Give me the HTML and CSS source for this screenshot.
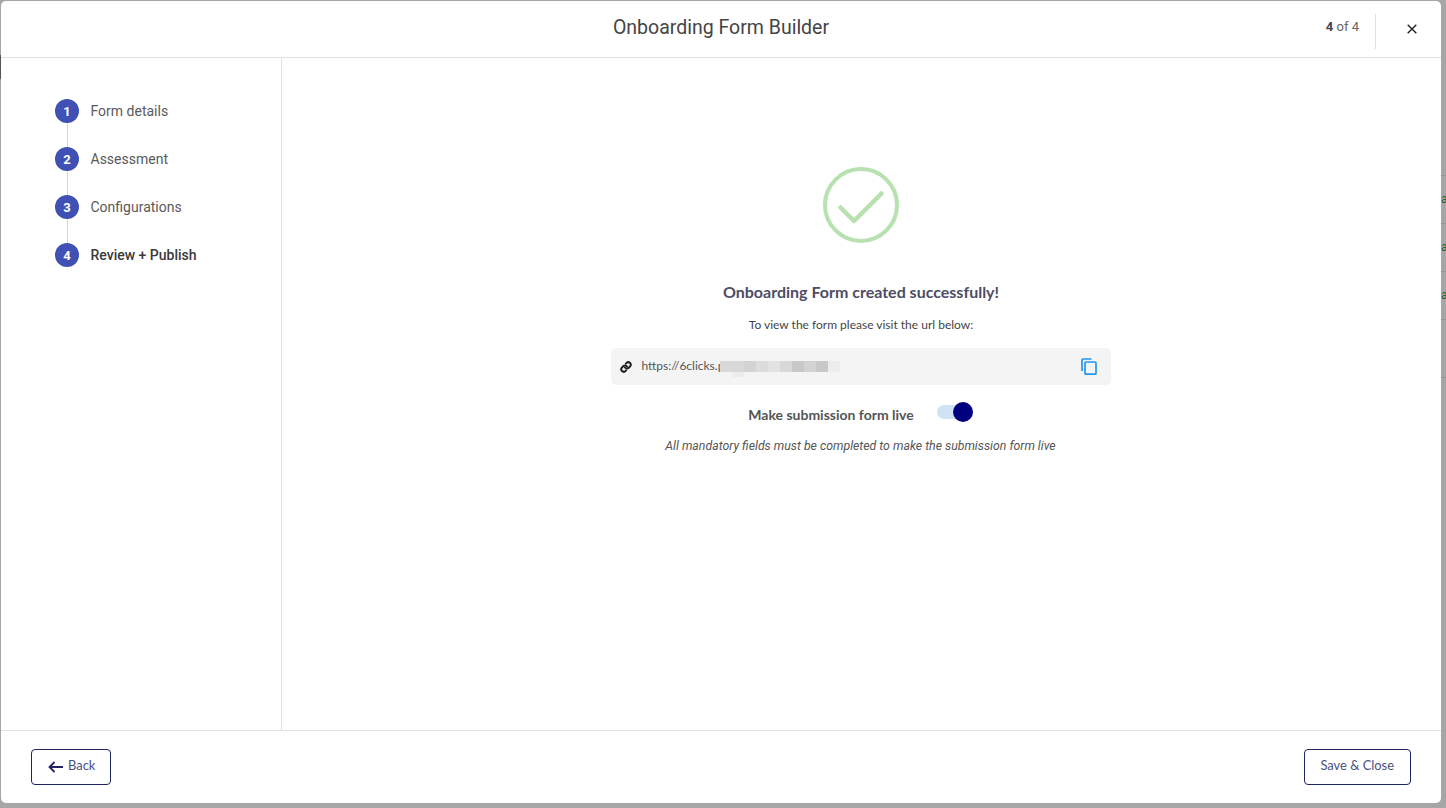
FILE: index.html
```html
<!DOCTYPE html>
<html lang="en">
<head>
    <meta charset="UTF-8">
    <title>Onboarding Form Builder</title>
    <link rel="stylesheet" href="styles.css">
</head>
<body>
    <div class="backdrop-left"></div>

    <div class="modal">
        <header class="modal-header">
            <h1>Onboarding Form Builder</h1>
            <div class="step-count"><strong>4</strong> of 4</div>
            <div class="header-divider"></div>
            <button class="close-btn" aria-label="Close">
                <svg width="10" height="10" viewBox="0 0 10 10"><path d="M0.7 0.7L9.3 9.3M9.3 0.7L0.7 9.3" stroke="#222" stroke-width="1.4" fill="none"/></svg>
            </button>
        </header>

        <div class="modal-body">
            <aside class="sidebar">
                <div class="step"><span class="step-number">1</span>Form details</div>
                <div class="step"><span class="step-number">2</span>Assessment</div>
                <div class="step"><span class="step-number">3</span>Configurations</div>
                <div class="step current"><span class="step-number">4</span>Review + Publish</div>
            </aside>

            <main class="content">
                <svg class="success-icon" width="76" height="76" viewBox="0 0 76 76" fill="none" stroke="#b7e1ae" stroke-linecap="round" stroke-linejoin="round">
                    <circle cx="38" cy="38" r="36" stroke-width="4"/>
                    <path d="M17.5 40.5L31 54L58.5 26.5" stroke-width="4.5"/>
                </svg>
                <h2>Onboarding Form created successfully!</h2>
                <p class="visit-text">To view the form please visit the url below:</p>

                <div class="url-box">
                    <svg class="link-icon" width="12" height="12" viewBox="0 0 24 24" fill="none" stroke="#222" stroke-width="4" stroke-linecap="round" stroke-linejoin="round">
                        <path d="M10 13a5 5 0 0 0 7.5.5l3-3a5 5 0 0 0-7-7l-1.7 1.7"/>
                        <path d="M14 11a5 5 0 0 0-7.5-.5l-3 3a5 5 0 0 0 7 7l1.7-1.7"/>
                    </svg>
                    <span class="url-text">https://6clicks.p</span>
                    <div class="url-blur">
                        <div class="blur-row">
                            <i class="b3"></i><i class="b3"></i><i class="b4"></i><i class="b2"></i><i class="b5"></i><i class="b3"></i><i class="b6"></i><i class="b4"></i><i class="b6"></i><i class="b1"></i>
                        </div>
                        <div class="blur-row low"><i class="none"></i><i class="b1"></i></div>
                    </div>
                    <button class="copy-btn" aria-label="Copy">
                        <svg width="16" height="17" viewBox="0 0 16 17" fill="none" stroke="#2196f3" stroke-width="1.7">
                            <path d="M1 13V1.8C1 1.3 1.3 1 1.8 1H10.5"/>
                            <rect x="4" y="4" width="11" height="12.2" rx="1"/>
                        </svg>
                    </button>
                </div>

                <div class="live-row">
                    <span class="live-label">Make submission form live</span>
                    <span class="toggle"><span class="toggle-knob"></span></span>
                </div>
                <p class="hint">All mandatory fields must be completed to make the submission form live</p>
            </main>
        </div>

        <footer class="modal-footer">
            <button class="btn back-btn">
                <svg width="15" height="12" viewBox="0 0 15 12" fill="none" stroke="#1f2361" stroke-width="1.8"><path d="M15 6H1.5M6.5 1L1.5 6l5 5"/></svg>
                <span>Back</span>
            </button>
            <button class="btn save-btn"><span>Save &amp; Close</span></button>
        </footer>
    </div>

    <div class="backdrop-right">
        <div class="bg-row"></div>
        <div class="bg-row"><span>a</span></div>
        <div class="bg-row"><span>a</span></div>
        <div class="bg-row"><span>a</span></div>
        <div class="bg-row tall"></div>
    </div>
</body>
</html>
```

FILE: styles.css
```css
* {
    margin: 0;
    padding: 0;
    box-sizing: border-box;
}

html, body {
    height: 100%;
}

body {
    font-family: "Lato", sans-serif;
    background: #a6a6a6;
    display: flex;
    height: 808px;
    overflow: hidden;
    padding: 1px 0 5px 0;
}

button {
    font-family: inherit;
    background: none;
    border: none;
    cursor: pointer;
}

.backdrop-left {
    width: 1px;
    height: 24px;
    margin-top: 54px;
    flex: none;
    background: #555;
}

.modal {
    width: 1440px;
    flex: none;
    background: white;
    border-radius: 5px;
    display: flex;
    flex-direction: column;
}

.modal-header {
    height: 57px;
    flex: none;
    border-bottom: 1px solid #e0e0e0;
    display: flex;
    align-items: flex-start;
    position: relative;
}

.modal-header h1 {
    position: absolute;
    left: 0;
    right: 0;
    top: 15px;
    text-align: center;
    font-family: "Roboto", sans-serif;
    font-size: 19.5px;
    line-height: 24px;
    font-weight: 400;
    color: #444;
}

.step-count {
    margin-left: auto;
    margin-top: 18px;
    font-family: "Roboto", sans-serif;
    font-size: 13px;
    line-height: 16px;
    color: #666;
}

.step-count strong {
    color: #444;
}

.header-divider {
    width: 1px;
    height: 35px;
    margin: 13px 0 0 16px;
    background: #e0e0e0;
}

.close-btn {
    width: 10px;
    height: 10px;
    margin: 23px 24px 0 31px;
    display: flex;
}

.modal-body {
    flex: 1;
    display: flex;
    min-height: 0;
}

.sidebar {
    width: 281px;
    flex: none;
    border-right: 1px solid #e0e0e0;
    padding-top: 29px;
    padding-left: 54px;
}

.step {
    height: 48px;
    display: flex;
    align-items: center;
    gap: 11.5px;
    font-family: "Roboto", sans-serif;
    font-size: 14px;
    color: #5a5a5a;
    position: relative;
}

.step:not(:last-child)::after {
    content: "";
    position: absolute;
    left: 12px;
    top: 30px;
    width: 1px;
    height: 36px;
    background: #d5d5d5;
}

.step.current {
    color: #3a3a3a;
    font-weight: 500;
}

.step-number {
    width: 24px;
    height: 24px;
    border-radius: 50%;
    background: #3f51b5;
    color: white;
    font-size: 13px;
    font-weight: 700;
    display: flex;
    align-items: center;
    justify-content: center;
    position: relative;
    z-index: 1;
}

.content {
    flex: 1;
    display: flex;
    flex-direction: column;
    align-items: center;
    padding-top: 109px;
    padding-right: 2px;
}

.success-icon {
    display: block;
}

.content h2 {
    margin-top: 39px;
    margin-left: 1px;
    font-size: 16px;
    line-height: 20px;
    font-weight: 700;
    color: #4d4d66;
}

.visit-text {
    margin-top: 15px;
    margin-left: 1px;
    font-size: 12px;
    line-height: 16px;
    color: #444;
}

.url-box {
    margin-top: 15px;
    width: 500px;
    height: 37px;
    background: #f4f4f4;
    border-radius: 5px;
    display: flex;
    align-items: center;
    padding: 0 14px 0 9px;
}

.link-icon {
    flex: none;
}

.url-text {
    margin-left: 10px;
    margin-top: -2px;
    width: 78px;
    white-space: nowrap;
    font-size: 12px;
    color: #555;
}

.url-blur {
    margin-top: 5px;
    position: relative;
}

.blur-row {
    display: flex;
    height: 11px;
}

.blur-row.low {
    height: 5px;
}

.blur-row i {
    width: 12px;
    height: 100%;
}

.b1 { background: #ececec; }
.b2 { background: #dcdcdc; }
.b3 { background: #d8d8d8; }
.b4 { background: #d3d3d3; }
.b5 { background: #e2e2e2; }
.b6 { background: #c8c8c8; }

.copy-btn {
    margin-left: auto;
    display: flex;
}

.live-row {
    margin-top: 19px;
    margin-right: 2px;
    display: flex;
    align-items: center;
    gap: 23px;
}

.live-label {
    font-size: 14px;
    font-weight: 700;
    color: #555;
    margin-top: 2px;
}

.toggle {
    display: block;
    width: 34px;
    height: 14px;
    margin-bottom: 4px;
    border-radius: 7px;
    background: #cfe2f6;
    position: relative;
}

.toggle-knob {
    position: absolute;
    right: -2px;
    top: -3px;
    width: 20px;
    height: 20px;
    border-radius: 50%;
    background: #00007f;
}

.hint {
    margin-top: 15px;
    font-family: "Roboto", sans-serif;
    font-size: 12.3px;
    font-style: italic;
    line-height: 16px;
    color: #555;
}

.modal-footer {
    height: 73px;
    flex: none;
    border-top: 1px solid #e0e0e0;
    display: flex;
    align-items: flex-start;
    justify-content: space-between;
    padding: 18px 30px 0;
}

.btn {
    height: 36px;
    padding: 0 16px;
    border: 1px solid #1f2361;
    border-radius: 4px;
    background: white;
    font-size: 12.9px;
    color: #4b4f80;
    display: flex;
    align-items: center;
    gap: 5px;
}

.btn span {
    margin-bottom: 4px;
}

.back-btn {
    padding-right: 15px;
}

.save-btn {
    padding-left: 15px;
}

.backdrop-right {
    width: 5px;
    flex: none;
    padding-top: 174px;
}

.bg-row {
    height: 48px;
    border-bottom: 1px solid #959595;
    font-family: "Roboto", sans-serif;
    font-size: 12px;
    line-height: 47px;
    overflow: hidden;
    color: #1c6b3a;
}

.bg-row:first-child {
    height: 1px;
}

.bg-row.tall {
    height: 58px;
}
```
